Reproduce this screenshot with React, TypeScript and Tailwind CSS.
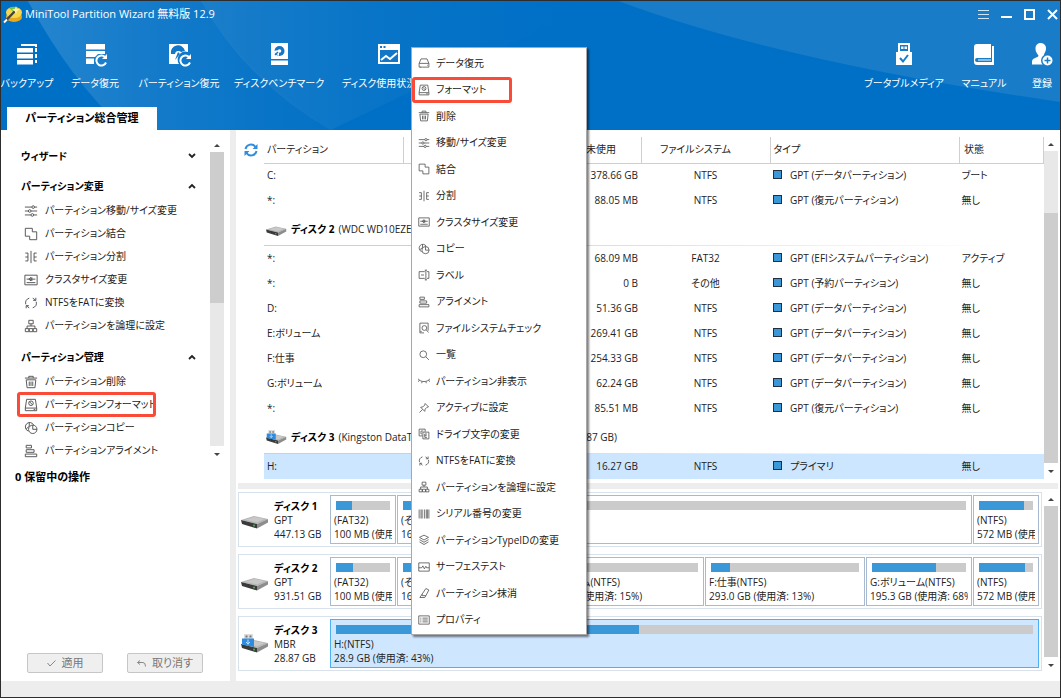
import React from 'react';

type IconName =
  | 'recover' | 'format' | 'trash' | 'sliders' | 'merge' | 'split' | 'cluster' | 'copy'
  | 'label' | 'align' | 'check' | 'search' | 'hide' | 'pin' | 'letter' | 'convert'
  | 'logical' | 'serial' | 'layers' | 'surface' | 'wipe' | 'props';

const iconShapes: Record<IconName, React.ReactNode> = {
  recover: (
    <>
      <path d="M1.5 8.5v5h3M1.5 8.5h13v5h-9M1.5 8.5 4 2.5h8l2.5 6" />
      <path d="M3 13.5h2M12 11h1" />
    </>
  ),
  format: (
    <>
      <path d="M3 1.5h10l1.5 10v3h-13v-3zM1.5 11.5h13M11 13h2" />
      <circle cx="8" cy="6" r="2.6" />
      <path d="m6.2 4.2 3.6 3.6" />
    </>
  ),
  trash: <path d="M1 3.5h14M5.5 3.5v-2h5v2M2.5 5.5l1 9h9l1-9zM6 7.5v5M8 7.5v5M10 7.5v5" />,
  sliders: (
    <>
      <path d="M1 3.5h8M12 3.5h3M1 8h4M8 8h7M1 12.5h7M11 12.5h4" />
      <circle cx="10.5" cy="3.5" r="1.5" />
      <circle cx="6.5" cy="8" r="1.5" />
      <circle cx="9.5" cy="12.5" r="1.5" />
    </>
  ),
  merge: <path d="M1.5 1.5h8v4h5v9h-8v-4h-5z" />,
  split: <path d="M8 1v14M1.5 3.5h3v9h-3M14.5 3.5h-3v9h3M1.5 8h3M11.5 8h3" />,
  cluster: (
    <>
      <path d="M1 2.5h14v11H1zM3 7h10M3 11h10" />
      <path d="M5.5 7 8 5v4zM9 5v4" />
    </>
  ),
  copy: (
    <>
      <path d="M5 11.5A5 5 0 1 1 11 4.5M6 1.5V6L2.5 9" />
      <circle cx="10" cy="9.5" r="4.8" />
      <path d="M10 4.7v4.8h4.8" />
    </>
  ),
  label: <path d="M9 3.5H1.5v9H9M12 3.5h2.5v9H12M10.5 1.5v13M9 1.5h3M9 14.5h3M4 8h4" />,
  align: <path d="M2.5 1.5h6v3h-6zM2.5 6.5h9v3h-9zM1.5 11.5h13v3h-13z" />,
  check: (
    <>
      <path d="M8 14.5H2.5v-13h11v10M5 12.5H3" />
      <circle cx="8.5" cy="8" r="3.2" />
      <path d="m11 10.5 3 3.5" />
    </>
  ),
  search: (
    <>
      <circle cx="7" cy="7" r="4.5" />
      <path d="m10.5 10.5 4 4" />
    </>
  ),
  hide: <path d="M0 5c4 5 12 5 16 0M2 6.5.5 9M5.5 8.5 5 11M10.5 8.5l.5 2.5M14 6.5 15.5 9" />,
  pin: <path d="m9.5 2 4.5 4.5-2 .5-2.5 2.5-.5 3L3.5 7l3-.5L9 4zM6 10l-4 4" />,
  letter: (
    <>
      <path d="M6 10.5H1.5v-9h8V5M6.5 5.5h8v9h-8z" />
      <path d="M4 4v4h1M4 4h3M9 8v4.5h3M9 8h3M9 10.2h2.5" />
    </>
  ),
  convert: (
    <>
      <path d="M2 9.5A6 6 0 0 1 6 2.5M14 6.5a6 6 0 0 1-4 7M10 2.5a6 6 0 0 1 3 2.5M6 13.5A6 6 0 0 1 3 11" />
      <path d="M13.5 2v3h-3M2.5 14v-3h3" />
    </>
  ),
  logical: <path d="M5.5 1.5h5v4h-5zM8 5.5V8M3.5 11V8h9v3M1.5 11h4v3.5h-4zM6 11h4v3.5H6zM10.5 11h4v3.5h-4z" />,
  serial: <path d="M1.5 2v12M4 2v12M5.5 2v12M8.5 2v12M11 2v12M12.5 2v12M14.5 2v12" />,
  layers: <path d="m8 1.5 6 3L8 8 2 4.5zM2 7.5 8 11l6-3.5M2 10.5 8 14l6-3.5" />,
  surface: <path d="M1 2.5h14v11H1zM1 9h4l1.5-2.5 2 4 2-3.5 1 2H15" />,
  wipe: <path d="m5.5 9.5 5-7.5 4 2-4 7.5h-5zM5.5 9.5l-3 4.500H9l1.500-2.500" />,
  props: <path d="M1 2.5h14v11H1zM3 5.5h1.5M6 5.5h7M3 8h1.5M6 8h7M3 10.5h1.5M6 10.5h7" />,
};

const LineIcon = ({ name, className = '' }: { name: IconName; className?: string }) => (
  <svg viewBox="0 0 16 16" fill="none" stroke="#555" strokeWidth="1.1" className={`shrink-0 ${className}`} aria-hidden="true">
    {iconShapes[name]}
  </svg>
);

const Drive = ({ usb = false, className = '' }: { usb?: boolean; className?: string }) => (
  <svg viewBox="0 0 28 20" className={`shrink-0 ${className}`} aria-hidden="true">
    <path d="M0 10 13 6l14 3-11 5z" fill="#b4b4b4" />
    <path d="M4 9.700 13.500 7 24 9l-8 3.500z" fill="#c8c8c8" />
    <path d="M0 10l16 4v4.500L1 14z" fill="#3a3a3a" />
    <path d="m16 14 11-5v3.500l-11 6z" fill="#8d8d8d" />
    <circle cx="13" cy="15.5" r="1" fill="#35c13a" />
    {usb && (
      <>
        <path d="M3 0h9v5H3z" fill="#dcdcdc" />
        <path d="M4.500 1.500h2v2h-2zM8.500 1.500h2v2h-2z" fill="#777" />
        <path d="M1 4.500h12v8.500L1 10.500z" fill="#2e8ce0" />
        <path d="M7 5.500v5M5 8l2 2 2-2" stroke="#bfe0ff" fill="none" />
      </>
    )}
  </svg>
);

const Logo = () => (
  <svg viewBox="0 0 20 20" className="h-5 w-5 shrink-0" aria-hidden="true">
    <ellipse cx="11" cy="13" rx="8" ry="5" fill="#e8a81e" />
    <ellipse cx="11" cy="8.500" rx="8" ry="5.500" fill="#f8d84a" />
    <path d="M11 8.500 6 4a8 5 0 0 1 9-.500z" fill="#7ac043" />
    <path d="M1 18.500 13 6" stroke="#444" strokeWidth="2.500" />
    <path d="M1 18.500 4 15.500" stroke="#fff" strokeWidth="2" />
    <path d="m13 2 1 3 3 .500-3 1.500-1 3-1.300-2.800L9 5.500l3-.700z" fill="#fff3b0" />
  </svg>
);

interface ToolItem {
  label: string;
  width: string;
  icon: React.ReactNode;
}

const leftTools: ToolItem[] = [
  {
    label: 'バックアップ',
    width: 'w-12',
    icon: (
      <>
        <path d="M6 1h16v3h-2V3H6zM20 5h2v4h-2zM20 11h2v4h-2zM20 17h2v3h-2z" fill="#fff" />
        <path d="M2 5h16v4.500H2zM2 11h16v4.500H2zM2 17h16v4.500H2z" fill="#fff" />
      </>
    ),
  },
  {
    label: 'データ復元',
    width: 'w-12',
    icon: (
      <>
        <path d="M3 1h19v5.500H3zM3 8h19v3h-7l-3 3H3zM3 15.500h8V21H3z" fill="#fff" />
        <path d="M22 14a5 5 0 1 0 1 5.500" stroke="#fff" strokeWidth="2" fill="none" />
        <path d="M24 11v5h-5z" fill="#fff" />
      </>
    ),
  },
  {
    label: 'パーティション復元',
    width: 'w-20',
    icon: (
      <>
        <path d="M2 1h19v8a8 8 0 0 0-9 12H2z" fill="#fff" />
        <path d="M4 11a7 7 0 0 1 14-3l-4 1a3.500 3.500 0 0 0-6 2z" fill="#1376c6" />
        <path d="m11 9 2 2-5 6z" fill="#1376c6" />
        <path d="M22 14a5 5 0 1 0 1 5.500" stroke="#fff" strokeWidth="2" fill="none" />
        <path d="M24 11v5h-5z" fill="#fff" />
      </>
    ),
  },
  {
    label: 'ディスクベンチマーク',
    width: 'w-20',
    icon: (
      <>
        <path d="M4 0h17v16H4zM4 17.500h17V22H4z" fill="#fff" />
        <circle cx="12.500" cy="8" r="5" fill="#1376c6" />
        <circle cx="12.500" cy="8" r="1.800" fill="#fff" />
        <path d="m6 8 6-1v6z" fill="#fff" />
        <path d="m8 12 3-3" stroke="#1376c6" strokeWidth="1.500" />
      </>
    ),
  },
  {
    label: 'ディスク使用状況分析',
    width: 'w-25',
    icon: (
      <>
        <path d="M1 1h22v20H1z" fill="#fff" />
        <path d="M3 7h18v12H3z" fill="#1376c6" />
        <path d="M3 3h2v2H3zM6.500 3h2v2h-2z" fill="#1376c6" />
        <path d="m4 17 5-4 4 3 7-6" stroke="#fff" strokeWidth="2" fill="none" />
      </>
    ),
  },
];

const rightTools: ToolItem[] = [
  {
    label: 'ブータブルメディア',
    width: 'w-18',
    icon: (
      <>
        <path d="M6 0h12v9H6z" fill="#fff" />
        <path d="M8 2h8v6H8z" fill="#187cc8" />
        <path d="M9 3.500h2.500V6H9zM12.500 3.500H15V6h-2.500z" fill="#fff" />
        <path d="M4 9h16v13H4z" fill="#fff" />
        <path d="m8 15 3 3.500 5-6.500" stroke="#187cc8" strokeWidth="2" fill="none" />
      </>
    ),
  },
  {
    label: 'マニュアル',
    width: 'w-12',
    icon: (
      <>
        <path d="M5 1h14v14H5a2 2 0 0 0 0 4h15V3h2v19H5a3 3 0 0 1-3-3V4a3 3 0 0 1 3-3z" fill="#fff" />
        <path d="M6 17h13" stroke="#fff" />
      </>
    ),
  },
  {
    label: '登録',
    width: 'w-7',
    icon: (
      <>
        <path d="M11 0a5 5 0 0 1 5 5.500c0 3-1.500 4-2 6 0 1 1 2 3 2.500v7.500H2v-3c0-3 5-4 6-5s0-1.500-1-3-1.500-3-1.500-5A5 5 0 0 1 11 0z" fill="#fff" />
        <circle cx="17.500" cy="17.500" r="6.500" fill="#187cc8" />
        <circle cx="17.500" cy="17.500" r="5" fill="#fff" />
        <path d="M17.500 14.500v6M14.500 17.500h6" stroke="#187cc8" strokeWidth="1.500" />
      </>
    ),
  },
];

const ToolButton = ({ item }: { item: ToolItem }) => (
  <button type="button" className={`flex shrink-0 flex-col items-center gap-2 ${item.width}`}>
    <svg viewBox="0 0 24 24" className="h-6 w-6" aria-hidden="true">
      {item.icon}
    </svg>
    <span className="leading-4 whitespace-nowrap">{item.label}</span>
  </button>
);

interface ActionItem {
  icon: IconName;
  label: string;
  marked?: boolean;
}

const changeItems: ActionItem[] = [
  { icon: 'sliders', label: 'パーティション移動/サイズ変更' },
  { icon: 'merge', label: 'パーティション結合' },
  { icon: 'split', label: 'パーティション分割' },
  { icon: 'cluster', label: 'クラスタサイズ変更' },
  { icon: 'convert', label: 'NTFSをFATに変換' },
  { icon: 'logical', label: 'パーティションを論理に設定' },
];

const manageItems: ActionItem[] = [
  { icon: 'trash', label: 'パーティション削除' },
  { icon: 'format', label: 'パーティションフォーマット', marked: true },
  { icon: 'copy', label: 'パーティションコピー' },
  { icon: 'align', label: 'パーティションアライメント' },
];

const menuItems: ActionItem[] = [
  { icon: 'recover', label: 'データ復元' },
  { icon: 'format', label: 'フォーマット', marked: true },
  { icon: 'trash', label: '削除' },
  { icon: 'sliders', label: '移動/サイズ変更' },
  { icon: 'merge', label: '結合' },
  { icon: 'split', label: '分割' },
  { icon: 'cluster', label: 'クラスタサイズ変更' },
  { icon: 'copy', label: 'コピー' },
  { icon: 'label', label: 'ラベル' },
  { icon: 'align', label: 'アライメント' },
  { icon: 'check', label: 'ファイルシステムチェック' },
  { icon: 'search', label: '一覧' },
  { icon: 'hide', label: 'パーティション非表示' },
  { icon: 'pin', label: 'アクティブに設定' },
  { icon: 'letter', label: 'ドライブ文字の変更' },
  { icon: 'convert', label: 'NTFSをFATに変換' },
  { icon: 'logical', label: 'パーティションを論理に設定' },
  { icon: 'serial', label: 'シリアル番号の変更' },
  { icon: 'layers', label: 'パーティションTypeIDの変更' },
  { icon: 'surface', label: 'サーフェステスト' },
  { icon: 'wipe', label: 'パーティション抹消' },
  { icon: 'props', label: 'プロパティ' },
];

const ScrollBar = ({ before, thumb, after }: { before: number; thumb: number; after: number }) => (
  <div className="flex w-3.5 shrink-0 flex-col">
    <button type="button" aria-label="上へ" className="flex h-3.5 items-center justify-center">
      <svg viewBox="0 0 6 3" className="h-[3px] w-1.5"><path d="M0 3 3 0l3 3z" fill="#444" /></svg>
    </button>
    <div className="flex flex-1 flex-col bg-[#e8e8e8]">
      <div style={{ flexGrow: before }} />
      <div className="bg-[#cdcdcd]" style={{ flexGrow: thumb }} />
      <div style={{ flexGrow: after }} />
    </div>
    <button type="button" aria-label="下へ" className="flex h-4 items-center justify-center">
      <svg viewBox="0 0 6 3" className="h-[3px] w-1.5"><path d="m0 0 3 3 3-3z" fill="#444" /></svg>
    </button>
  </div>
);

const SectionTitle = ({ label, open = false }: { label: string; open?: boolean }) => (
  <button type="button" aria-expanded={open} className="flex h-[26px] w-full items-center justify-between pr-3.5 pl-5 font-bold text-black">
    {label}
    <svg viewBox="0 0 8 6" className="h-1.5 w-2" fill="none" stroke="#222" strokeWidth="1.8">
      <path d={open ? 'M1 5l3-3 3 3' : 'M1 1l3 3 3-3'} />
    </svg>
  </button>
);

const SideItem = ({ icon, label, marked }: ActionItem) => (
  <li className="relative">
    <button type="button" className="flex h-[23px] items-center gap-[7px] pl-[23px] whitespace-nowrap">
      <LineIcon name={icon} className="h-3.5 w-3.5" />
      {label}
    </button>
    {marked && <div className="pointer-events-none absolute -top-px left-4 h-[25px] w-[139px] rounded-[3px] border-[3px] border-[#f94b37]" />}
  </li>
);

type Row =
  | { disk: string; detail: string; usb?: boolean }
  | { name: string; size: string; used: string; free: string; fs: string; type: string; status: string; selected?: boolean };

const rows: Row[] = [
  { name: 'C:', size: '445.90 GB', used: '67.24 GB', free: '378.66 GB', fs: 'NTFS', type: 'GPT (データパーティション)', status: 'ブート' },
  { name: '*:', size: '572.00 MB', used: '483.95 MB', free: '88.05 MB', fs: 'NTFS', type: 'GPT (復元パーティション)', status: '無し' },
  { disk: 'ディスク 2', detail: '(WDC WD10EZEX-00BN5A0, GPT, 931.51 GB)' },
  { name: '*:', size: '100.00 MB', used: '31.91 MB', free: '68.09 MB', fs: 'FAT32', type: 'GPT (EFIシステムパーティション)', status: 'アクティブ' },
  { name: '*:', size: '16.00 MB', used: '16.00 MB', free: '0 B', fs: 'その他', type: 'GPT (予約パーティション)', status: '無し' },
  { name: 'D:', size: '125.19 GB', used: '73.83 GB', free: '51.36 GB', fs: 'NTFS', type: 'GPT (データパーティション)', status: '無し' },
  { name: 'E:ボリューム', size: '317.39 GB', used: '47.98 GB', free: '269.41 GB', fs: 'NTFS', type: 'GPT (データパーティション)', status: '無し' },
  { name: 'F:仕事', size: '292.97 GB', used: '38.64 GB', free: '254.33 GB', fs: 'NTFS', type: 'GPT (データパーティション)', status: '無し' },
  { name: 'G:ボリューム', size: '195.31 GB', used: '133.07 GB', free: '62.24 GB', fs: 'NTFS', type: 'GPT (データパーティション)', status: '無し' },
  { name: '*:', size: '572.00 MB', used: '486.49 MB', free: '85.51 MB', fs: 'NTFS', type: 'GPT (復元パーティション)', status: '無し' },
  { disk: 'ディスク 3', detail: '(Kingston DataTraveler 3.0 USB, Removable, MBR, 28.87 GB)', usb: true },
  { name: 'H:', size: '28.87 GB', used: '12.60 GB', free: '16.27 GB', fs: 'NTFS', type: 'プライマリ', status: '無し', selected: true },
];

const PartitionTable = () => (
  <table className="w-full table-fixed border-collapse">
    <colgroup>
      <col className="w-[139px]" />
      <col className="w-[79px]" />
      <col className="w-[79px]" />
      <col className="w-20" />
      <col className="w-[129px]" />
      <col />
      <col className="w-[84px]" />
    </colgroup>
    <thead>
      <tr className="h-[26px] border-b border-[#cfcfcf]">
        <th className="border-r border-[#cfcfcf] pl-[3px] text-left font-normal">パーティション</th>
        <th className="border-r border-[#cfcfcf] font-normal">容量</th>
        <th className="border-r border-[#cfcfcf] font-normal">使用済</th>
        <th className="border-r border-[#cfcfcf] font-normal">未使用</th>
        <th className="border-r border-[#cfcfcf] pr-5 font-normal">ファイルシステム</th>
        <th className="border-r border-[#cfcfcf] pl-[3px] text-left font-normal">タイプ</th>
        <th className="border-r border-[#cfcfcf] pl-1 text-left font-normal">状態</th>
      </tr>
    </thead>
    <tbody>
      {rows.map((row, i) =>
        'disk' in row ? (
          <tr key={i} className="h-[33px]">
            <td colSpan={7} className="bg-linear-to-r from-[#cfcfcf] from-20% to-transparent to-95% bg-[length:100%_1px] bg-bottom bg-no-repeat pl-0.5">
              <div className="flex items-center whitespace-nowrap">
                <Drive usb={row.usb} className="h-[15px] w-[21px]" />
                <span className="ml-1 font-bold text-black">{row.disk}</span>
                <span className="ml-1">{row.detail}</span>
              </div>
            </td>
          </tr>
        ) : (
          <tr key={i} className={`h-[25px] ${row.selected ? 'bg-[#cde6ff]' : ''}`}>
            <td className="pl-[3px]">{row.name}</td>
            <td className="pr-[3px] text-right">{row.size}</td>
            <td className="pr-[3px] text-right">{row.used}</td>
            <td className="pr-[3px] text-right">{row.free}</td>
            <td className="text-center">{row.fs}</td>
            <td className="pl-[3px] whitespace-nowrap">
              <span className="mr-2 inline-block h-[9px] w-[9px] border border-[#1f2f3f] bg-[#3a97d8]" />
              {row.type}
            </td>
            <td className="pl-0.5">{row.status}</td>
          </tr>
        ),
      )}
    </tbody>
  </table>
);

interface Block {
  name: string;
  info: string;
  used: number;
  width: string;
  selected?: boolean;
}

const disks: { title: string; scheme: string; size: string; usb?: boolean; blocks: Block[] }[] = [
  {
    title: 'ディスク 1', scheme: 'GPT', size: '447.13 GB',
    blocks: [
      { name: '(FAT32)', info: '100 MB (使用済: 30%)', used: 30, width: 'w-[66px]' },
      { name: '(その他)', info: '16 MB', used: 100, width: 'w-[66px]' },
      { name: 'C:(NTFS)', info: '445.9 GB', used: 15, width: 'flex-1' },
      { name: '(NTFS)', info: '572 MB (使用済: 84%)', used: 84, width: 'w-[66px]' },
    ],
  },
  {
    title: 'ディスク 2', scheme: 'GPT', size: '931.51 GB',
    blocks: [
      { name: '(FAT32)', info: '100 MB (使用済: 31%)', used: 31, width: 'w-[66px]' },
      { name: '(その他)', info: '16 MB', used: 100, width: 'w-[66px]' },
      { name: 'D:(NTFS)', info: '125.2 GB', used: 58, width: 'w-17' },
      { name: 'E:ボリューム(NTFS)', info: '317.4 GB (使用済: 15%)', used: 15, width: 'flex-1' },
      { name: 'F:仕事(NTFS)', info: '293.0 GB (使用済: 13%)', used: 13, width: 'w-[160px]' },
      { name: 'G:ボリューム(NTFS)', info: '195.3 GB (使用済: 68%)', used: 68, width: 'w-[106px]' },
      { name: '(NTFS)', info: '572 MB (使用済: 85%)', used: 85, width: 'w-[66px]' },
    ],
  },
  {
    title: 'ディスク 3', scheme: 'MBR', size: '28.87 GB', usb: true,
    blocks: [{ name: 'H:(NTFS)', info: '28.9 GB (使用済: 43%)', used: 43.5, width: 'flex-1', selected: true }],
  },
];

const DiskCard = ({ disk }: { disk: (typeof disks)[number] }) => (
  <div className="flex border border-[#d8e2ec] py-0.5 pr-0.5 leading-[14px]">
    <div className="flex w-[91px] shrink-0 items-center gap-[5px] pl-0.5">
      <Drive usb={disk.usb} className="h-5 w-7" />
      <div className="whitespace-nowrap">
        <div className="font-bold text-black">{disk.title}</div>
        <div>{disk.scheme}</div>
        <div>{disk.size}</div>
      </div>
    </div>
    <div className="flex min-w-0 flex-1 gap-px">
      {disk.blocks.map((block, i) => (
        <div
          key={i}
          className={`min-w-0 border px-[3px] pt-[5px] pb-0.5 ${block.width} ${block.selected ? 'border-[#4db0f2] bg-[#cfe6ff]' : 'border-[#a9b9cf] bg-white'}`}
        >
          <div className="mx-0.5 h-[9px] bg-[#cbcbcb]">
            <div className="h-full bg-[#3a97d8]" style={{ width: `${block.used}%` }} />
          </div>
          <div className="mt-[3px] overflow-hidden whitespace-nowrap">{block.name}</div>
          <div className="overflow-hidden whitespace-nowrap">{block.info}</div>
        </div>
      ))}
    </div>
  </div>
);

const ContextMenu = () => (
  <ul role="menu" className="absolute top-[46px] left-[410px] flex h-[588px] w-[176px] flex-col border border-[#a8a8a8] bg-white pt-0.5 pb-px shadow-[2px_2px_2px_rgba(0,0,0,0.5)]">
    {menuItems.map((item) => (
      <li key={item.label} role="none" className="relative flex flex-1">
        <button type="button" role="menuitem" className="flex w-full items-center gap-1.5 pl-1.5 whitespace-nowrap">
          <LineIcon name={item.icon} className="h-3 w-3" />
          {item.label}
        </button>
        {item.marked && <div className="pointer-events-none absolute inset-y-0 left-0 w-[100px] rounded-[3px] border-[3px] border-[#f94b37]" />}
      </li>
    ))}
  </ul>
);

const Header = () => (
  <header className="relative overflow-hidden bg-[#0070c6] text-white">
    <svg viewBox="0 0 1060 129" preserveAspectRatio="none" className="absolute inset-0 h-full w-full" aria-hidden="true">
      <defs>
        <linearGradient id="beamA" x1="0" x2="1" y1="0" y2="0">
          <stop offset="0" stopColor="#2f8bd0" stopOpacity="0.8" />
          <stop offset="1" stopColor="#0f76c7" stopOpacity="0.3" />
        </linearGradient>
        <linearGradient id="beamB" x1="0" x2="1" y1="0" y2="0">
          <stop offset="0" stopColor="#2282cb" stopOpacity="0.8" />
          <stop offset="1" stopColor="#0070c6" stopOpacity="0" />
        </linearGradient>
      </defs>
      <path d="M27 0h173q40 70 130 129H124Q70 80 27 0z" fill="url(#beamA)" />
      <path d="M200 0h400L330 129Q245 80 200 0z" fill="url(#beamB)" />
      <path d="M618 0q160 60 442 101V0z" fill="#187cc8" />
    </svg>
    <div className="relative">
      <div className="flex h-[26px] items-center pl-0.5">
        <Logo />
        <h1 className="ml-0.5 flex-1 text-[11px]">MiniTool Partition Wizard 無料版 12.9</h1>
        <div className="flex items-center gap-3 pr-0.5">
          <button type="button" aria-label="メニュー">
            <svg viewBox="0 0 11 11" className="h-[11px] w-[11px]" stroke="#cfe4f5"><path d="M0 1.5h11M0 5.5h11M0 9.5h11" /></svg>
          </button>
          <button type="button" aria-label="最小化">
            <svg viewBox="0 0 11 11" className="h-[11px] w-[11px]" stroke="#fff" strokeWidth="2"><path d="M0 8h11" /></svg>
          </button>
          <button type="button" aria-label="最大化">
            <svg viewBox="0 0 11 11" className="h-[11px] w-[11px]" stroke="#fff" strokeWidth="2" fill="none"><path d="M1 1h9v9H1z" /></svg>
          </button>
          <button type="button" aria-label="閉じる">
            <svg viewBox="0 0 11 11" className="h-[11px] w-[11px]" stroke="#fff" strokeWidth="2"><path d="m1 1 9 9M10 1l-9 9" /></svg>
          </button>
        </div>
      </div>
      <div className="flex h-20 justify-between pt-4 pr-1 pl-0.5">
        <div className="flex gap-5">
          {leftTools.map((item) => <ToolButton key={item.label} item={item} />)}
        </div>
        <div className="flex gap-5">
          {rightTools.map((item) => <ToolButton key={item.label} item={item} />)}
        </div>
      </div>
      <div role="tablist" className="flex pl-1.5">
        <button type="button" role="tab" aria-selected="true" className="h-[23px] w-[150px] bg-white text-[11px] font-bold text-black">
          パーティション総合管理
        </button>
      </div>
    </div>
  </header>
);

const Sidebar = () => (
  <aside className="flex w-[229px] shrink-0 flex-col">
    <div className="mt-2 flex">
      <div className="min-w-0 flex-1 pt-[5px]">
        <SectionTitle label="ウィザード" />
        <div className="mt-1">
          <SectionTitle label="パーティション変更" open />
          <ul>{changeItems.map((item) => <SideItem key={item.label} {...item} />)}</ul>
        </div>
        <div className="mt-[7px]">
          <SectionTitle label="パーティション管理" open />
          <ul>{manageItems.map((item) => <SideItem key={item.label} {...item} />)}</ul>
        </div>
      </div>
      <ScrollBar before={0} thumb={153} after={145} />
      <div className="w-1.5" />
    </div>
    <p className="mt-1.5 pl-3.5 text-[11px] leading-[18px] font-bold text-black">0 保留中の操作</p>
    <div className="mt-auto flex gap-6 pb-2 pl-[26px] text-[11px] text-[#777]">
      <button type="button" className="flex h-5 w-[76px] items-center justify-center gap-1.5 rounded-[2px] border border-[#c6c6c6] bg-[#efefef]">
        <svg viewBox="0 0 9 7" className="h-[7px] w-[9px]" fill="none" stroke="#888"><path d="m.5 3 2.500 3 5.500-5.500" /></svg>
        適用
      </button>
      <button type="button" className="flex h-5 w-[76px] items-center justify-center gap-1.5 rounded-[2px] border border-[#c6c6c6] bg-[#efefef]">
        <svg viewBox="0 0 9 7" className="h-[7px] w-[9px]" fill="none" stroke="#888"><path d="M3 .5l-2.500 2 2.500 2M.5 2.500H6Q8.500 2.500 8.500 6.500" /></svg>
        取り消す
      </button>
    </div>
  </aside>
);

const App: React.FC = () => {
  return (
    <div className="relative flex h-screen flex-col overflow-hidden border border-[#2d2d2d] bg-white font-['Open_Sans','Noto_Sans_CJK_JP',sans-serif] text-[10px] text-[#222] [font-feature-settings:'palt']">
      <Header />
      <div className="flex min-h-0 flex-1">
        <Sidebar />
        <div className="w-1.5 shrink-0 bg-[#ededed]" />
        <main className="flex min-w-0 flex-1 flex-col pr-0.5 pl-0.5">
          <section className="flex pt-[7px] pb-1" aria-label="パーティション一覧">
            <button type="button" aria-label="更新" className="mt-1.5 mr-1.5 ml-1.5 h-3.5 w-3.5 shrink-0">
              <svg viewBox="0 0 14 14" fill="none" stroke="#2f8de0" strokeWidth="2">
                <path d="M1.500 6A5.500 5.500 0 0 1 11.500 4M12.500 8a5.500 5.500 0 0 1-10 2" />
                <path d="M13.500 1v5h-5zM.5 13V8h5z" fill="#2f8de0" stroke="none" />
              </svg>
            </button>
            <div className="min-w-0 flex-1"><PartitionTable /></div>
            <ScrollBar before={63} thumb={252} after={0} />
          </section>
          <div className="h-1.5 bg-[#ededed]" />
          <section className="flex min-h-0 flex-1 pt-[3px] pb-2" aria-label="ディスクマップ">
            <div className="flex min-w-0 flex-1 flex-col gap-[7px] pr-0.5">
              {disks.map((disk) => <DiskCard key={disk.title} disk={disk} />)}
            </div>
            <ScrollBar before={0} thumb={1} after={0} />
          </section>
        </main>
      </div>
      <footer className="h-4 shrink-0 bg-[#ededed]" />
      <ContextMenu />
    </div>
  );
};

export default App;
